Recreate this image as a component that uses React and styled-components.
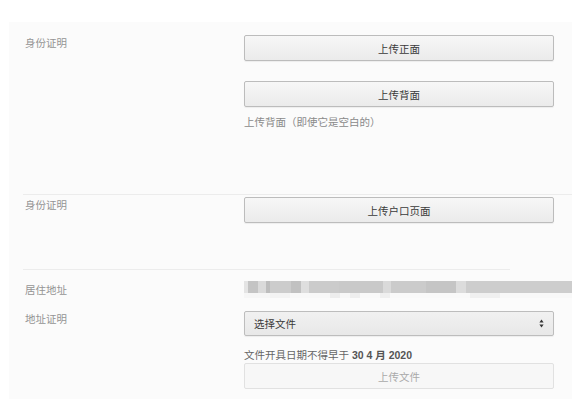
import React from 'react';
import styled, { createGlobalStyle } from 'styled-components';

const GlobalStyle = createGlobalStyle`
  html, body {
    margin: 0;
    padding: 0;
    background: #ffffff;
    overflow: hidden;
  }
  body {
    font-family: "Liberation Sans", "Noto Sans CJK SC", sans-serif;
    font-size: 10.5px;
    color: #333;
  }
`;

const Panel = styled.div`
  margin: 22px 0 0 9px;
  padding-bottom: 9px;
  background: #fbfbfb;
  min-height: 368px;
`;

const Section = styled.div`
  display: grid;
  grid-template-columns: 219px 310px;
  padding: ${p => p.$pad};
  padding-left: 16px;
  row-gap: ${p => p.$gap || 0}px;
`;

const Label = styled.div`
  padding-top: ${p => p.$top || 1}px;
  line-height: 14px;
  color: #949494;
  font-family: "Noto Sans CJK SC", sans-serif;
`;

const Field = styled.div`
  display: flex;
  flex-direction: column;
`;

const Button = styled.div`
  height: 24px;
  margin-top: ${p => p.$mt || 0}px;
  display: flex;
  align-items: center;
  justify-content: center;
  border: 1px solid ${p => (p.$disabled ? '#e1e1e1' : '#bcbcbc')};
  border-radius: 2px;
  background: ${p =>
    p.$disabled ? '#f7f7f7' : 'linear-gradient(#f7f7f7, #ebebeb)'};
  box-shadow: ${p => (p.$disabled ? 'none' : '0 1px 1px rgba(0,0,0,0.06)')};
  color: ${p => (p.$disabled ? '#a9a9a9' : '#3a3a3a')};
  font-family: "Noto Sans CJK SC", sans-serif;
`;

const Helper = styled.div`
  margin-top: ${p => p.$mt}px;
  line-height: 14px;
  color: ${p => p.$color || '#8a8a8a'};
  font-family: "Liberation Sans", "Noto Sans CJK SC", sans-serif;
  b {
    font-weight: 600;
    color: #555;
  }
`;

const Divider = styled.div`
  margin: 0 ${p => p.$right}px 0 14px;
  border-top: 1px solid #ececec;
`;

const SelectBox = styled.div`
  height: 23px;
  display: flex;
  align-items: center;
  justify-content: space-between;
  padding: 0 9px 0 9px;
  border: 1px solid #bdbdbd;
  border-radius: 2px;
  background: linear-gradient(#f1f1f1, #e8e8e8);
  box-shadow: 0 1px 1px rgba(0, 0, 0, 0.06);
  color: #3a3a3a;
  font-family: "Noto Sans CJK SC", sans-serif;
`;

const Blur = styled.div`
  width: 328px;
  height: 17px;
  display: flex;
  flex-direction: column;
`;

const BlurRow = styled.div`
  display: flex;
  height: ${p => p.$h}px;
`;

const BlurCell = styled.span`
  display: block;
  flex: none;
`;

const topRow = [
  [4, '#e4e4e4'], [10, '#c4c4c4'], [8, '#dadada'], [4, '#bdbdbd'],
  [21, '#cccccc'], [10, '#c1c1c1'], [8, '#dedede'], [30, '#cbcbcb'],
  [44, '#c9c9c9'], [8, '#dadada'], [35, '#cbcbcb'], [30, '#c5c5c5'],
  [10, '#dcdcdc'], [106, '#cdcdcd'],
];

const bottomRow = [
  [26, '#f6f6f6'], [20, '#f3f3f3'], [40, '#f8f8f8'], [10, '#ededed'],
  [10, '#f7f7f7'], [10, '#eeeeee'], [20, '#f9f9f9'], [10, '#efefef'],
  [80, '#f9f9f9'], [30, '#f0f0f0'], [72, '#f8f8f8'],
];

function SortIcon() {
  return (
    <svg width="5" height="9" viewBox="0 0 5 9">
      <path d="M2.5 0.5 L4.6 3.4 L0.4 3.4 Z" fill="#333" />
      <path d="M2.5 8.5 L4.6 5.6 L0.4 5.6 Z" fill="#333" />
    </svg>
  );
}

export default function App() {
  return (
    <>
      <GlobalStyle />
      <Panel>
        <Section $pad="13px 0 65px">
          <Label>身份证明</Label>
          <Field>
            <Button>上传正面</Button>
            <Button $mt={20}>上传背面</Button>
            <Helper $mt={8}>上传背面（即使它是空白的）</Helper>
          </Field>
        </Section>
        <Divider $right={0} />
        <Section $pad="2px 0 46px">
          <Label>身份证明</Label>
          <Field>
            <Button>上传户口页面</Button>
          </Field>
        </Section>
        <Divider $right={62} />
        <Section $pad="11px 0 0" $gap={13}>
          <Label $top={2}>居住地址</Label>
          <Blur>
            <BlurRow $h={12}>
              {topRow.map(([w, c], i) => (
                <BlurCell key={i} style={{ width: w, background: c }} />
              ))}
            </BlurRow>
            <BlurRow $h={5}>
              {bottomRow.map(([w, c], i) => (
                <BlurCell key={i} style={{ width: w, background: c }} />
              ))}
            </BlurRow>
          </Blur>
          <Label>地址证明</Label>
          <Field>
            <SelectBox>
              <span>选择文件</span>
              <SortIcon />
            </SelectBox>
            <Helper $mt={12} $color="#666">
              文件开具日期不得早于 <b>30 4 月 2020</b>
            </Helper>
            <Button $mt={1} $disabled>上传文件</Button>
          </Field>
        </Section>
      </Panel>
    </>
  );
}
